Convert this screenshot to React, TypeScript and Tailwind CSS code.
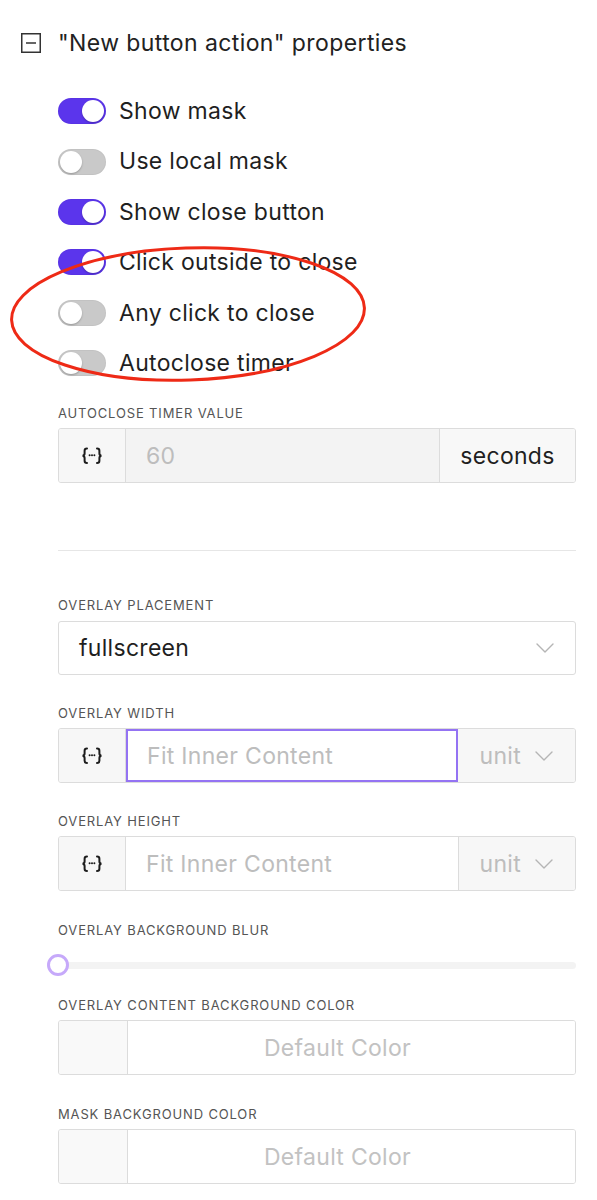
import React from 'react';

const toggles = [
  { label: 'Show mask', on: true },
  { label: 'Use local mask', on: false },
  { label: 'Show close button', on: true },
  { label: 'Click outside to close', on: true },
  { label: 'Any click to close', on: false },
  { label: 'Autoclose timer', on: false },
];

function Toggle({ on }: { on: boolean }) {
  return (
    <div
      className={`w-[48px] h-[26px] rounded-full flex items-center px-[2px] shadow-[inset_0_0_0_1px_rgba(0,0,0,0.03)] ${
        on ? 'bg-[#5b35ec] justify-end' : 'bg-[#c9c9c9] justify-start'
      }`}
    >
      <div className="w-[22px] h-[22px] rounded-full bg-white shadow-[0_1px_2px_rgba(0,0,0,0.25)]" />
    </div>
  );
}

function Braces() {
  return (
    <svg width="26" height="22" viewBox="0 0 26 22" fill="none">
      <path d="M8 3.5C6.3 3.5 5.6 4.3 5.6 5.8V8.6C5.6 9.9 5 10.6 3.6 10.8C5 11 5.6 11.7 5.6 13V15.8C5.6 17.3 6.3 18.1 8 18.1" stroke="#1c1c1c" strokeWidth="2" strokeLinecap="round" />
      <path d="M18 3.5C19.7 3.5 20.4 4.3 20.4 5.8V8.6C20.4 9.9 21 10.6 22.4 10.8C21 11 20.4 11.7 20.4 13V15.8C20.4 17.3 19.7 18.1 18 18.1" stroke="#1c1c1c" strokeWidth="2" strokeLinecap="round" />
      <circle cx="10.6" cy="10.2" r="1" fill="#1c1c1c" />
      <circle cx="13" cy="10.2" r="1" fill="#1c1c1c" />
      <circle cx="15.4" cy="10.2" r="1" fill="#1c1c1c" />
    </svg>
  );
}

function Chevron() {
  return (
    <svg width="18" height="10" viewBox="0 0 18 10" fill="none">
      <path d="M1 1L9 9L17 1" stroke="#b5b5b5" strokeWidth="1.4" strokeLinecap="round" strokeLinejoin="round" />
    </svg>
  );
}

function Label({ children }: { children: React.ReactNode }) {
  return <div className="h-4 leading-4 text-[13px] tracking-[0.85px] text-[#555]">{children}</div>;
}

function UnitInput({ focused }: { focused?: boolean }) {
  return (
    <div className="mt-[7px] h-[55px] flex border border-[#dcdcdc] rounded-[3px] overflow-hidden">
      <div className="w-[67px] shrink-0 bg-[#f7f7f7] border-r border-[#dcdcdc] flex items-center justify-center">
        <Braces />
      </div>
      <div
        className={`flex-1 flex items-center text-[23px] tracking-[0.3px] text-[#bdbdbd] bg-white ${
          focused ? 'border-2 border-[#9473f3] pl-[19px]' : 'pl-[20px]'
        }`}
      >
        Fit Inner Content
      </div>
      <div
        className={`w-[117px] shrink-0 bg-[#f7f7f7] flex items-center justify-end pr-[22px] gap-[14px] text-[23px] tracking-[0.3px] text-[#bdbdbd] ${
          focused ? '' : 'border-l border-[#dcdcdc]'
        }`}
      >
        <span>unit</span>
        <Chevron />
      </div>
    </div>
  );
}

function ColorInput() {
  return (
    <div className="mt-[7px] h-[55px] flex border border-[#dcdcdc] rounded-[3px] overflow-hidden">
      <div className="w-[69px] shrink-0 bg-[#f9f9f9] border-r border-[#dcdcdc]" />
      <div className="flex-1 flex items-center justify-center pr-[28px] text-[23px] tracking-[0.3px] text-[#c2c2c2] bg-white">Default Color</div>
    </div>
  );
}

export default function App() {
  return (
    <div className="relative w-[597px] min-h-[1200px] bg-white text-[#1f1f1f] pt-[23px] pb-6" style={{ fontFamily: 'Inter, "Noto Sans", sans-serif' }}>
      <div className="h-10 flex items-center pl-[21px] gap-[17px]">
        <svg width="20" height="20" viewBox="0 0 20 20" fill="none">
          <rect x="0.75" y="0.75" width="18.5" height="18.5" stroke="#333" strokeWidth="1.5" />
          <path d="M5 10H15" stroke="#333" strokeWidth="1.5" />
        </svg>
        <span className="text-[23px] tracking-[0.4px] text-[#222]">"New button action" properties</span>
      </div>

      <div className="pl-[58px] pr-[21px] mt-[23px]">
        <div className="flex flex-col">
          {toggles.map((t) => (
            <div key={t.label} className="h-[50.4px] flex items-center gap-[13px]">
              <Toggle on={t.on} />
              <span className="text-[23px] tracking-[0.3px] text-[#1f1f1f]">{t.label}</span>
            </div>
          ))}
        </div>

        <div className="mt-[17px]">
          <Label>AUTOCLOSE TIMER VALUE</Label>
          <div className="mt-[7px] h-[55px] flex border border-[#dcdcdc] rounded-[3px] overflow-hidden">
            <div className="w-[67px] shrink-0 bg-[#f7f7f7] border-r border-[#dcdcdc] flex items-center justify-center">
              <Braces />
            </div>
            <div className="flex-1 bg-[#f3f3f3] flex items-center pl-[20px] text-[23px] tracking-[0.3px] text-[#bdbdbd]">60</div>
            <div className="w-[136px] shrink-0 bg-[#f8f8f8] border-l border-[#dcdcdc] flex items-center justify-center text-[23px] tracking-[0.3px] text-[#1f1f1f]">
              seconds
            </div>
          </div>
        </div>

        <div className="mt-[67px] border-t border-[#e6e6e6]" />

        <div className="mt-[46px]">
          <Label>OVERLAY PLACEMENT</Label>
          <div className="mt-[8px] h-[54px] flex items-center justify-between border border-[#dcdcdc] rounded-[3px] pl-[20px] pr-[21px]">
            <span className="text-[23px] tracking-[0.3px] text-[#1f1f1f]">fullscreen</span>
            <Chevron />
          </div>
        </div>

        <div className="mt-[30px]">
          <Label>OVERLAY WIDTH</Label>
          <UnitInput focused />
        </div>

        <div className="mt-[30px]">
          <Label>OVERLAY HEIGHT</Label>
          <UnitInput />
        </div>

        <div className="mt-[31px]">
          <Label>OVERLAY BACKGROUND BLUR</Label>
          <div className="relative mt-[16px] h-[22px] flex items-center">
            <div className="w-full h-[7px] rounded-full bg-[#f3f3f3]" />
            <div className="absolute left-[-11px] top-0 w-[22px] h-[22px] rounded-full bg-white border-[3px] border-[#c6a9fa]" />
          </div>
        </div>

        <div className="mt-[21px]">
          <Label>OVERLAY CONTENT BACKGROUND COLOR</Label>
          <ColorInput />
        </div>

        <div className="mt-[31px]">
          <Label>MASK BACKGROUND COLOR</Label>
          <ColorInput />
        </div>
      </div>

      <svg className="absolute left-0 top-0 pointer-events-none" width="597" height="420" viewBox="0 0 597 420" fill="none">
        <ellipse cx="188" cy="314" rx="176.5" ry="66" transform="rotate(-2 188 314)" stroke="#ee2a16" strokeWidth="3" />
      </svg>
    </div>
  );
}
